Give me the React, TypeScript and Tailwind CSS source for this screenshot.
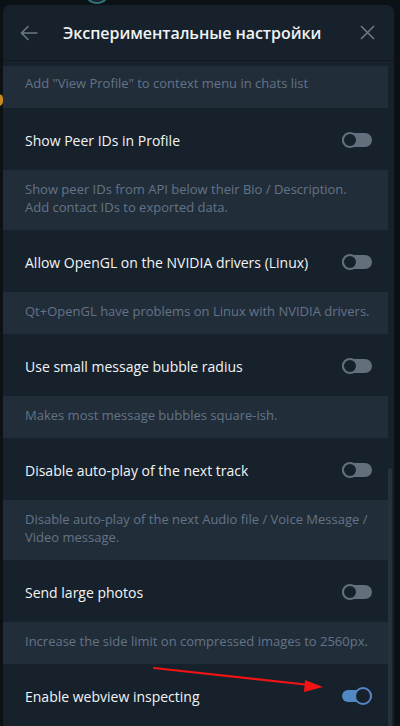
import React from 'react';

type Item = { label: string; desc: string[]; on?: boolean };

const items: Item[] = [
  {
    label: 'Show Peer IDs in Profile',
    desc: ['Show peer IDs from API below their Bio / Description.', 'Add contact IDs to exported data.'],
  },
  {
    label: 'Allow OpenGL on the NVIDIA drivers (Linux)',
    desc: ['Qt+OpenGL have problems on Linux with NVIDIA drivers.'],
  },
  {
    label: 'Use small message bubble radius',
    desc: ['Makes most message bubbles square-ish.'],
  },
  {
    label: 'Disable auto-play of the next track',
    desc: ['Disable auto-play of the next Audio file / Voice Message /', 'Video message.'],
  },
  {
    label: 'Send large photos',
    desc: ['Increase the side limit on compressed images to 2560px.'],
  },
  { label: 'Enable webview inspecting', desc: [], on: true },
];

function Toggle({ on }: { on?: boolean }) {
  if (on) {
    return (
      <div className="relative w-[30px] h-[18px]">
        <div className="absolute left-0 right-0 top-[3px] h-[12px] rounded-full bg-[#5288c1]" />
        <div className="absolute right-0 top-0 w-[18px] h-[18px] rounded-full border-2 border-[#5288c1] bg-[#17212b]" />
      </div>
    );
  }
  return (
    <div className="relative w-[30px] h-[18px]">
      <div className="absolute left-0 right-0 top-[2px] h-[14px] rounded-full bg-[#626f7c]" />
      <div className="absolute left-0 top-[1px] w-[16px] h-[16px] rounded-full border-2 border-[#626f7c] bg-[#17212b]" />
    </div>
  );
}

function Desc({ lines, first }: { lines: string[]; first?: boolean }) {
  return (
    <div
      className={
        (first ? 'pt-[8px] pb-[16px] ' : 'pt-[10px] pb-[14px] ') +
        'bg-[#222d3a] pl-[22px] pr-4 text-[13px] leading-[18px] text-[#627487]'
      }
    >
      {lines.map((l) => (
        <div key={l}>{l}</div>
      ))}
    </div>
  );
}

export default function App() {
  return (
    <div
      className="relative w-[400px] h-[726px] overflow-hidden bg-[#0c1116] pt-[5px] pl-[3px]"
      style={{ fontFamily: '"Open Sans", "Noto Sans", sans-serif' }}
    >
      {/* bits of the window behind */}
      <div className="absolute left-[84px] top-[-22px] w-[26px] h-[26px] rounded-full border-2 border-[#2f6f78] bg-[#1b2228]" />
      <div className="absolute left-[-6px] top-[94px] w-[9px] h-[12px] rounded-full bg-[#c98a1e]" />

      <div className="w-[391px] h-full rounded-t-[7px] bg-[#17212b] flex flex-col overflow-hidden">
        {/* header */}
        <div className="h-[56px] shrink-0 flex items-center border-b border-[#111922]">
          <div className="w-[52px] flex justify-center">
            <svg width="18" height="16" viewBox="0 0 18 16" fill="none" stroke="#6c7883" strokeWidth="1.6" strokeLinecap="round">
              <path d="M17 8H2M8 1.5L1.5 8L8 14.5" />
            </svg>
          </div>
          <div className="flex-1 ml-[8px] text-[16px] font-semibold text-[#f0f2f4] tracking-[-0.05px]">Экспериментальные настройки</div>
          <div className="w-[50px] flex justify-center pr-[3px]">
            <svg width="15" height="15" viewBox="0 0 15 15" fill="none" stroke="#6c7883" strokeWidth="1.6">
              <path d="M1 1L14 14M14 1L1 14" />
            </svg>
          </div>
        </div>

        {/* content */}
        <div className="flex flex-1 min-h-0">
          <div className="flex-1 pt-[5px]">
            <Desc first lines={['Add "View Profile" to context menu in chats list']} />
            {items.map((it) => (
              <div key={it.label}>
                <div className="h-[62px] flex items-center justify-between pl-[22px] pr-[16px] pt-[2px]">
                  <span className="text-[14px] text-[#f2f4f6]">{it.label}</span>
                  <Toggle on={it.on} />
                </div>
                {it.desc.length > 0 && <Desc lines={it.desc} />}
              </div>
            ))}
          </div>
          <div className="w-[6px] shrink-0">
            <div className="mt-[407px] w-[4px] h-[300px] rounded-full bg-[#27313d]" />
          </div>
        </div>
      </div>

      {/* red annotation arrow */}
      <svg className="absolute left-0 top-0 pointer-events-none" width="400" height="726">
        <line x1="154" y1="668" x2="310" y2="685" stroke="#f01414" strokeWidth="2.2" strokeLinecap="round" />
        <polygon points="323,687 305,680 304,692" fill="#f01414" />
      </svg>
    </div>
  );
}
